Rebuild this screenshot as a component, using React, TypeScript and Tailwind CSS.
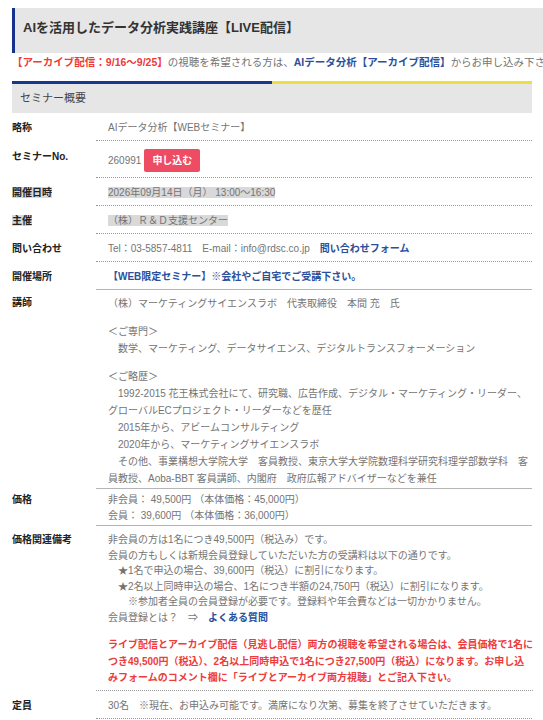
import { ReactNode } from "react";

type RowProps = {
  label: string;
  children: ReactNode;
  solid?: boolean;
  mark?: boolean;
  top?: string;
  bottom?: string;
  lead?: string;
};

// one line of the seminar table: bold label on the left, value with an underline on the right
const Row = ({
  label,
  children,
  solid,
  mark,
  top = "pt-[7px]",
  bottom = "pb-[4px]",
  lead = "leading-[16px]",
}: RowProps) => (
  <div className="flex">
    <div className={`w-[84px] shrink-0 leading-[16px] font-bold text-[#222] ${top}`}>
      <span className={mark ? "bg-[#d9d9d9]" : ""}>{label}</span>
    </div>
    <div
      className={`flex-1 pl-3 border-b ${
        solid ? "border-solid border-[#b5b5b5]" : "border-dotted border-[#9a9a9a]"
      } ${top} ${bottom} ${lead}`}
    >
      {children}
    </div>
  </div>
);

const Line = ({ children, className }: { children: ReactNode; className?: string }) => (
  <div className={`whitespace-nowrap ${className ?? ""}`}>{children}</div>
);

export default function App() {
  return (
    <div className="w-[543px] h-[720px] overflow-hidden bg-white font-['Liberation_Sans','Noto_Sans_CJK_JP',sans-serif] text-[10px] text-[#747474]">
      <div className="pl-3 pt-2">
        {/* page title */}
        <h1 className="w-[560px] h-[45px] bg-[#e6e6e6] border-l-[3px] border-[#15338c] pl-2 pt-[11px] text-[13px] leading-[17px] font-bold text-[#333]">
          AIを活用したデータ分析実践講座【LIVE配信】
        </h1>

        {/* archive notice */}
        <p className="h-[18px] whitespace-nowrap text-[10.5px] leading-[18px]">
          <span className="font-bold text-[#ee3b3b]">【アーカイブ配信：9/16〜9/25】</span>
          の視聴を希望される方は、
          <span className="font-bold text-[#2c4f9c]">AIデータ分析【アーカイブ配信】</span>
          からお申し込み下さい。
        </p>

        <div className="w-[520px] mt-[10px]">
          <div className="flex h-[3px]">
            <div className="flex-1 bg-[#1a3790]" />
            <div className="flex-1 bg-[#ece03c]" />
          </div>
          <div className="h-[29px] bg-[#e6e6e6] pl-2 text-[11px] leading-[29px] text-[#444]">
            セミナー概要
          </div>

          <Row label="略称">AIデータ分析【WEBセミナー】</Row>

          <Row label="セミナーNo." top="pt-[8px]" bottom="pb-[5px]">
            <div className="flex items-center gap-[3px]">
              <span>260991</span>
              <span className="h-[23px] px-[8px] rounded-[2px] bg-[#ee4c63] text-white font-bold leading-[23px]">
                申し込む
              </span>
            </div>
          </Row>

          <Row label="開催日時" mark>
            <span className="bg-[#d9d9d9]">2026年09月14日（月） 13:00〜16:30</span>
          </Row>

          <Row label="主催" mark>
            <span className="bg-[#d9d9d9]">（株）Ｒ＆Ｄ支援センター</span>
          </Row>

          <Row label="問い合わせ">
            Tel：03-5857-4811{"　"}E-mail：info@rdsc.co.jp{"　"}
            <span className="font-bold text-[#2c4f9c]">問い合わせフォーム</span>
          </Row>

          <Row label="開催場所" solid>
            <span className="font-bold text-[#2c4f9c]">【WEB限定セミナー】※会社やご自宅でご受講下さい。</span>
          </Row>

          <Row label="講師" solid top="pt-[5px]" bottom="pb-[1px]" lead="leading-[17px]">
            <Line>（株）マーケティングサイエンスラボ　代表取締役　本間 充　氏</Line>
            <div className="mt-[11px]">
              <Line>＜ご専門＞</Line>
              <Line>　数学、マーケティング、データサイエンス、デジタルトランスフォーメーション</Line>
            </div>
            <div className="mt-[11px]">
              <Line>＜ご略歴＞</Line>
              <Line>　1992-2015 花王株式会社にて、研究職、広告作成、デジタル・マーケティング・リーダー、</Line>
              <Line>グローバルECプロジェクト・リーダーなどを歴任</Line>
              <Line>　2015年から、アビームコンサルティング</Line>
              <Line>　2020年から、マーケティングサイエンスラボ</Line>
              <Line>　その他、事業構想大学院大学　客員教授、東京大学大学院数理科学研究科理学部数学科　客</Line>
              <Line>員教授、Aoba-BBT 客員講師、内閣府　政府広報アドバイザーなどを兼任</Line>
            </div>
          </Row>

          <Row label="価格" solid top="pt-[3px]" bottom="pb-[1px]">
            <Line>非会員：  49,500円 （本体価格：45,000円）</Line>
            <Line>会員：  39,600円 （本体価格：36,000円）</Line>
          </Row>

          <Row label="価格関連備考" top="pt-[6px]" bottom="pb-[3px]" lead="leading-[15.5px]">
            <Line>非会員の方は1名につき49,500円（税込み）です。</Line>
            <Line>会員の方もしくは新規会員登録していただいた方の受講料は以下の通りです。</Line>
            <Line>　★1名で申込の場合、39,600円（税込）に割引になります。</Line>
            <Line>　★2名以上同時申込の場合、1名につき半額の24,750円（税込）に割引になります。</Line>
            <Line>　　※参加者全員の会員登録が必要です。登録料や年会費などは一切かかりません。</Line>
            <Line>
              会員登録とは？{"　"}⇒{"　"}<span className="font-bold text-[#2c4f9c]">よくある質問</span>
            </Line>
            <div className="mt-[12px] font-bold text-[#ee3b3b] leading-[16.5px]">
              <Line>ライブ配信とアーカイブ配信（見逃し配信）両方の視聴を希望される場合は、会員価格で1名に</Line>
              <Line>つき49,500円（税込）、2名以上同時申込で1名につき27,500円（税込）になります。お申し込</Line>
              <Line>みフォームのコメント欄に「ライブとアーカイブ両方視聴」とご記入下さい。</Line>
            </div>
          </Row>

          <Row label="定員">30名　※現在、お申込み可能です。満席になり次第、募集を終了させていただきます。</Row>
        </div>
      </div>
    </div>
  );
}
